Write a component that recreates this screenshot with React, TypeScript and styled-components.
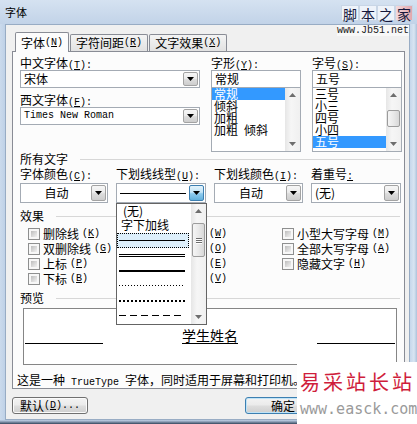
import React from "react";
import styled, { createGlobalStyle, css } from "styled-components";

const GlobalStyle = createGlobalStyle`
  html, body {
    margin: 0;
    padding: 0;
    background: #ffffff;
  }

  body {
    font-family: "Noto Sans CJK SC", "Noto Sans", sans-serif;
    font-size: 12px;
    color: #000;
    overflow: hidden;
  }

  *, *::before, *::after {
    box-sizing: border-box;
  }
`;

type LineKind = "single" | "double" | "thick" | "dotted" | "dotBold" | "dashed";

const lineStyles = {
  single: css`height: 1px; background: #000;`,
  double: css`height: 3px; border-top: 1px solid #000; border-bottom: 1px solid #000;`,
  thick: css`height: 2px; background: #000;`,
  dotted: css`height: 1px; background: repeating-linear-gradient(90deg, #000 0 1px, transparent 1px 3px);`,
  dotBold: css`height: 2px; background: repeating-linear-gradient(90deg, #000 0 2px, transparent 2px 4px);`,
  dashed: css`height: 1px; background: repeating-linear-gradient(90deg, #000 0 7px, transparent 7px 11px);`,
};

function Caret({ up, color = "#000" }: { up?: boolean; color?: string }) {
  return (
    <svg width="7" height="4" viewBox="0 0 7 4">
      <path d={up ? "M0 4H7L3.5 0Z" : "M0 0H7L3.5 4Z"} fill={color} />
    </svg>
  );
}

function Key({ k, tail = "" }: { k: string; tail?: string }) {
  return <Mono>(<u>{k}</u>){tail}</Mono>;
}

function ScrollBar({ thumbTop, thumbH, grip }: { thumbTop?: number; thumbH?: number; grip?: boolean }) {
  return (
    <Scroll>
      <ScrollArrow><Caret up color="#6e6e6e" /></ScrollArrow>
      <ScrollTrack>
        {thumbH ? (
          <Thumb $top={thumbTop || 0} $h={thumbH}>
            {grip && <><Grip /><Grip /><Grip /></>}
          </Thumb>
        ) : null}
      </ScrollTrack>
      <ScrollArrow><Caret color="#6e6e6e" /></ScrollArrow>
    </Scroll>
  );
}

export default function App() {
  const lines: LineKind[] = ["single", "double", "thick", "dotted", "dotBold", "dashed"];

  return (
    <>
      <GlobalStyle />
      <Window>
        <TitleBar>字体</TitleBar>
        <Body>
          <Edge $side="left" />
          <Client>
            <TabBar>
              <Tab $active>字体<Key k="N" /></Tab>
              <Tab>字符间距<Key k="R" /></Tab>
              <Tab>文字效果<Key k="X" /></Tab>
            </TabBar>

            <Panel>
              <TopGrid>
                <Column>
                  <Label>中文字体<Key k="T" tail=":" /></Label>
                  <Combo>
                    <ComboText>宋体</ComboText>
                    <DropButton><Caret /></DropButton>
                  </Combo>
                  <Label $mt={5}>西文字体<Key k="F" tail=":" /></Label>
                  <Combo>
                    <ComboText><Mono>Times New Roman</Mono></ComboText>
                    <DropButton><Caret /></DropButton>
                  </Combo>
                </Column>

                <Column>
                  <Label>字形<Key k="Y" tail=":" /></Label>
                  <TextBox>常规</TextBox>
                  <ListBox>
                    <ListItems>
                      <ListItem $sel>常规</ListItem>
                      <ListItem>倾斜</ListItem>
                      <ListItem>加粗</ListItem>
                      <ListItem>加粗<Mono> </Mono>倾斜</ListItem>
                    </ListItems>
                    <ScrollBar />
                  </ListBox>
                </Column>

                <Column>
                  <Label>字号<Key k="S" tail=":" /></Label>
                  <TextBox>五号</TextBox>
                  <ListBox>
                    <ListItems>
                      <ListItem>三号</ListItem>
                      <ListItem>小三</ListItem>
                      <ListItem>四号</ListItem>
                      <ListItem>小四</ListItem>
                      <ListItem $sel>五号</ListItem>
                    </ListItems>
                    <ScrollBar thumbTop={8} thumbH={17} />
                  </ListBox>
                </Column>
              </TopGrid>

              <Section $mt={0}>所有文字</Section>

              <FieldRow>
                <div>
                  <Label>字体颜色<Key k="C" tail=":" /></Label>
                  <Combo $field>
                    <ComboText $center>自动</ComboText>
                    <DropButton><Caret /></DropButton>
                  </Combo>
                </div>
                <div>
                  <Label>下划线线型<Key k="U" tail=":" /></Label>
                  <Combo $field>
                    <ComboText><Rule $kind="single" /></ComboText>
                    <DropButton $hot><Caret /></DropButton>
                    <DropList>
                      <DropItems>
                        <DropText $h={13} $pl={6}>(无)</DropText>
                        <DropText $h={16} $pl={4}>字下加线</DropText>
                        {lines.map((kind, i) => (
                          <DropLine key={kind} $focus={i === 0}>
                            <Rule $kind={kind} />
                          </DropLine>
                        ))}
                      </DropItems>
                      <ScrollBar thumbTop={5} thumbH={34} grip />
                    </DropList>
                  </Combo>
                </div>
                <div>
                  <Label>下划线颜色<Key k="I" tail=":" /></Label>
                  <Combo $field>
                    <ComboText $center>自动</ComboText>
                    <DropButton><Caret /></DropButton>
                  </Combo>
                </div>
                <div>
                  <Label>着重号<Mono><u>:</u></Mono></Label>
                  <Combo $field>
                    <ComboText>(无)</ComboText>
                    <DropButton><Caret /></DropButton>
                  </Combo>
                </div>
              </FieldRow>

              <Section $mt={6}>效果</Section>

              <CheckGrid>
                <CheckItem><Box />删除线<Key k="K" /></CheckItem>
                <CheckItem><Box />双删除线<Key k="G" /></CheckItem>
                <CheckItem><Box />上标<Key k="P" /></CheckItem>
                <CheckItem><Box />下标<Key k="B" /></CheckItem>
                <CheckItem><Box />阴影<Key k="W" /></CheckItem>
                <CheckItem><Box />空心<Key k="O" /></CheckItem>
                <CheckItem><Box />阳文<Key k="E" /></CheckItem>
                <CheckItem><Box />阴文<Key k="V" /></CheckItem>
                <CheckItem><Box />小型大写字母<Key k="M" /></CheckItem>
                <CheckItem><Box />全部大写字母<Key k="A" /></CheckItem>
                <CheckItem><Box />隐藏文字<Key k="H" /></CheckItem>
              </CheckGrid>

              <Section $mt={5}>预览</Section>

              <PreviewBox>
                <SideRule />
                <PreviewText>学生姓名</PreviewText>
                <SideRule />
              </PreviewBox>

              <Note>这是一种<Mono> TrueType </Mono>字体，同时适用于屏幕和打印机。</Note>
            </Panel>

            <ButtonRow>
              <Button>默认<Key k="D" tail="..." /></Button>
              <Button $default>确定</Button>
            </ButtonRow>
          </Client>
          <Edge $side="right" />
        </Body>
        <BottomEdge />

        <TopMark>
          <MarkTiles>
            <MarkTile>脚</MarkTile>
            <MarkTile>本</MarkTile>
            <MarkTile>之</MarkTile>
            <MarkTile $red>家</MarkTile>
          </MarkTiles>
          <MarkUrl>www.Jb51.net</MarkUrl>
        </TopMark>

        <BottomMark>
          <MarkTitle>易采站长站</MarkTitle>
          <MarkSite>www.easck.com</MarkSite>
        </BottomMark>
      </Window>
    </>
  );
}

const Mono = styled.span`
  font-family: "Liberation Mono", "DejaVu Sans Mono", monospace;
  font-size: 10px;
`;

const Window = styled.div`
  position: relative;
  width: 417px;
  height: 424px;
  display: flex;
  flex-direction: column;
  overflow: hidden;
  background: #c3d4e9;
`;

const TitleBar = styled.div`
  flex: none;
  height: 24px;
  padding: 6px 0 0 5px;
  font-size: 11px;
  line-height: 13px;
  background: linear-gradient(180deg, #d5e2f1 0%, #c2d3e8 100%);
`;

const Body = styled.div`
  flex: 1;
  display: flex;
  min-height: 0;
`;

const Edge = styled.div<{ $side: "left" | "right" }>`
  flex: none;
  width: ${p => (p.$side === "left" ? 5 : 8)}px;
  background: ${p =>
    p.$side === "left"
      ? "linear-gradient(90deg, #cbdaec, #bfd1e7)"
      : "linear-gradient(90deg, #c6d7eb 0, #d9e5f2 50%, #9fb6d2 100%)"};
`;

const BottomEdge = styled.div`
  flex: none;
  height: 4px;
  background: linear-gradient(180deg, #c3d4e9 0, #8193aa 2px, #34465c 4px);
`;

const Client = styled.div`
  flex: 1;
  display: flex;
  flex-direction: column;
  background: #f0f0f0;
  border: 1px solid #98acc4;
  padding: 7px 4px 0 6px;
`;

const TabBar = styled.div`
  position: relative;
  z-index: 1;
  display: flex;
  align-items: flex-end;
  height: 19px;
  padding-left: 3px;
`;

const Tab = styled.div<{ $active?: boolean }>`
  height: ${p => (p.$active ? 20 : 17)}px;
  margin-bottom: ${p => (p.$active ? -1 : 0)}px;
  padding: 0 5px;
  display: flex;
  align-items: center;
  line-height: 14px;
  white-space: nowrap;
  border: 1px solid #898c95;
  border-bottom: none;
  border-radius: 2px 2px 0 0;
  background: ${p => (p.$active ? "#fcfcfc" : "linear-gradient(180deg, #f4f4f4, #e2e2e2)")};
  & + & {
    margin-left: ${p => (p.$active ? 0 : 1)}px;
  }
`;

const Panel = styled.div`
  height: 338px;
  display: flex;
  flex-direction: column;
  border: 1px solid #898c95;
  background: #fcfcfc;
  padding: 0 2px 0 7px;
`;

const TopGrid = styled.div`
  margin-top: 4px;
  display: grid;
  grid-template-columns: 180px 90px 90px;
  column-gap: 11px;
`;

const Column = styled.div`
  display: flex;
  flex-direction: column;
`;

const Label = styled.div<{ $mt?: number }>`
  height: 14px;
  margin-top: ${p => p.$mt ?? 0}px;
  line-height: 14px;
  white-space: nowrap;
`;

const Combo = styled.div<{ $field?: boolean }>`
  position: relative;
  height: ${p => (p.$field ? 20 : 18)}px;
  margin-top: ${p => (p.$field ? 2 : 0)}px;
  display: flex;
  padding: 1px;
  background: #fff;
  border: 1px solid #a4abb4;
`;

const ComboText = styled.div<{ $center?: boolean }>`
  flex: 1;
  min-width: 0;
  display: flex;
  align-items: center;
  justify-content: ${p => (p.$center ? "center" : "flex-start")};
  padding-left: ${p => (p.$center ? 0 : 2)}px;
  line-height: 14px;
  white-space: nowrap;
`;

const DropButton = styled.div<{ $hot?: boolean }>`
  flex: none;
  width: 15px;
  display: flex;
  align-items: center;
  justify-content: center;
  border: 1px solid ${p => (p.$hot ? "#3c7fb1" : "#a3a3a3")};
  border-radius: 2px;
  background: ${p =>
    p.$hot
      ? "linear-gradient(180deg, #e3f3fc 0%, #c2e4f7 45%, #8ecbee 55%, #62b0dc 100%)"
      : "linear-gradient(180deg, #f6f6f6 0%, #ececec 45%, #dcdcdc 55%, #cdcdcd 100%)"};
`;

const TextBox = styled.div`
  height: 18px;
  padding-left: 3px;
  line-height: 16px;
  background: #fff;
  border: 1px solid #a4abb4;
`;

const ListBox = styled.div`
  height: 65px;
  margin-top: -1px;
  display: flex;
  background: #fff;
  border: 1px solid #a4abb4;
`;

const ListItems = styled.div`
  flex: 1;
  min-width: 0;
  overflow: hidden;
`;

const ListItem = styled.div<{ $sel?: boolean }>`
  height: 12px;
  padding-left: 2px;
  line-height: 12px;
  white-space: nowrap;
  ${p => p.$sel && css`
    background: #3399ff;
    color: #fff;
  `}
`;

const Scroll = styled.div`
  flex: none;
  width: 15px;
  display: flex;
  flex-direction: column;
  background: linear-gradient(90deg, #e6e6e6, #f6f6f6 40%, #f0f0f0);
`;

const ScrollArrow = styled.div`
  flex: none;
  height: 14px;
  display: flex;
  align-items: center;
  justify-content: center;
`;

const ScrollTrack = styled.div`
  flex: 1;
  min-height: 0;
`;

const Thumb = styled.div<{ $top: number; $h: number }>`
  height: ${p => p.$h}px;
  margin: ${p => p.$top}px 1px 0;
  display: flex;
  flex-direction: column;
  align-items: center;
  justify-content: center;
  gap: 1px;
  border: 1px solid #9c9c9c;
  border-radius: 2px;
  background: linear-gradient(90deg, #f5f5f5 0%, #e9e9e9 50%, #d8d8d8 100%);
`;

const Grip = styled.span`
  width: 6px;
  height: 1px;
  background: #6c6c6c;
  box-shadow: 0 1px 0 #fff;
`;

const Section = styled.div<{ $mt: number }>`
  height: 14px;
  margin-top: ${p => p.$mt}px;
  display: flex;
  align-items: center;
  line-height: 14px;
  white-space: nowrap;

  &::after {
    content: "";
    flex: 1;
    height: 1px;
    margin: 0 2px 0 12px;
    background: #d7d7d7;
  }
`;

const FieldRow = styled.div`
  margin-top: 1px;
  display: grid;
  grid-template-columns: 88px 90px 89px 90px;
  column-gap: 8px;
`;

const DropList = styled.div`
  position: absolute;
  z-index: 5;
  top: 19px;
  left: -1px;
  width: 91px;
  height: 122px;
  display: flex;
  background: #fff;
  border: 1px solid #646464;
`;

const DropItems = styled.div`
  flex: 1;
  min-width: 0;
  display: flex;
  flex-direction: column;
`;

const DropText = styled.div<{ $h: number; $pl: number }>`
  height: ${p => p.$h}px;
  padding-left: ${p => p.$pl}px;
  line-height: ${p => p.$h}px;
  white-space: nowrap;
`;

const DropLine = styled.div<{ $focus?: boolean }>`
  height: 15px;
  margin-right: 2px;
  display: flex;
  align-items: center;
  padding-left: 2px;
  ${p => p.$focus && css`
    background: #ddeffb;
    outline: 1px dotted #000;
    outline-offset: -1px;
  `}
`;

const Rule = styled.div<{ $kind: LineKind }>`
  flex: none;
  width: 66px;
  ${p => lineStyles[p.$kind]}
`;

const CheckGrid = styled.div`
  margin-top: 3px;
  padding-left: 8px;
  display: grid;
  grid-template-columns: 139px 115px 1fr;
  grid-template-rows: repeat(4, 15px);
  grid-auto-flow: column;
`;

const CheckItem = styled.div`
  display: flex;
  align-items: center;
  gap: 3px;
  line-height: 15px;
  white-space: nowrap;
`;

const Box = styled.span`
  flex: none;
  width: 12px;
  height: 12px;
  padding: 2px;
  border: 1px solid #8e8f8f;
  background: linear-gradient(135deg, #bdbdbd, #f2f2f2) content-box, #f7f7f7;
`;

const PreviewBox = styled.div`
  width: 374px;
  height: 57px;
  margin: 3px 0 0 3px;
  padding: 0 1px;
  display: flex;
  align-items: flex-start;
  justify-content: space-between;
  background: #fff;
  border: 1px solid #858585;
`;

const SideRule = styled.div`
  width: 78px;
  height: 1px;
  margin-top: 34px;
  background: #000;
`;

const PreviewText = styled.span`
  margin-top: 18px;
  font-size: 14px;
  line-height: 16px;
  border-bottom: 1px solid #000;
`;

const Note = styled.div`
  height: 14px;
  margin: 8px 0 0 -3px;
  line-height: 14px;
  white-space: nowrap;
`;

const ButtonRow = styled.div`
  margin-top: 8px;
  display: flex;
  padding-right: 84px;
`;

const Button = styled.div<{ $default?: boolean }>`
  width: 76px;
  height: 17px;
  display: flex;
  align-items: center;
  justify-content: center;
  line-height: 14px;
  white-space: nowrap;
  border: 1px solid ${p => (p.$default ? "#3c7fb1" : "#707070")};
  border-radius: 3px;
  background: linear-gradient(180deg, #f3f3f3 0%, #ebebeb 45%, #dddddd 55%, #cfcfcf 100%);
  box-shadow: inset 0 0 0 1px ${p => (p.$default ? "#bfe3f7" : "#fbfbfb")};

  &:first-child {
    margin-right: auto;
  }
`;

const TopMark = styled.div`
  position: absolute;
  top: 5px;
  left: 337px;
  width: 76px;
  display: flex;
  flex-direction: column;
  align-items: flex-end;
  gap: 4px;
`;

const MarkTiles = styled.div`
  display: flex;
`;

const MarkTile = styled.span<{ $red?: boolean }>`
  width: 18px;
  height: 16px;
  font-size: 14px;
  line-height: 16px;
  text-align: center;
  color: #15183c;
  border: 1px solid #c9d6e6;
  background: ${p => (p.$red ? "linear-gradient(90deg, #f3d9dc, #e2a7ad)" : "#eef3fa")};
`;

const MarkUrl = styled.div`
  align-self: flex-start;
  font-family: "Liberation Mono", "DejaVu Sans Mono", monospace;
  font-size: 10px;
  line-height: 11px;
  color: #202020;
  background: rgba(255, 255, 255, 0.55);
`;

const BottomMark = styled.div`
  position: absolute;
  left: 297px;
  top: 362px;
  right: 0;
  bottom: 0;
  display: flex;
  flex-direction: column;
  padding: 9px 0 0 3px;
  background: #fff;
`;

const MarkTitle = styled.div`
  font-size: 20px;
  line-height: 22px;
  letter-spacing: 3px;
  white-space: nowrap;
  color: #cf1d3b;
`;

const MarkSite = styled.div`
  margin-top: 9px;
  font-family: "DejaVu Sans Mono", "Liberation Mono", monospace;
  font-size: 15px;
  line-height: 15px;
  white-space: nowrap;
  color: #9a9a9a;
`;
